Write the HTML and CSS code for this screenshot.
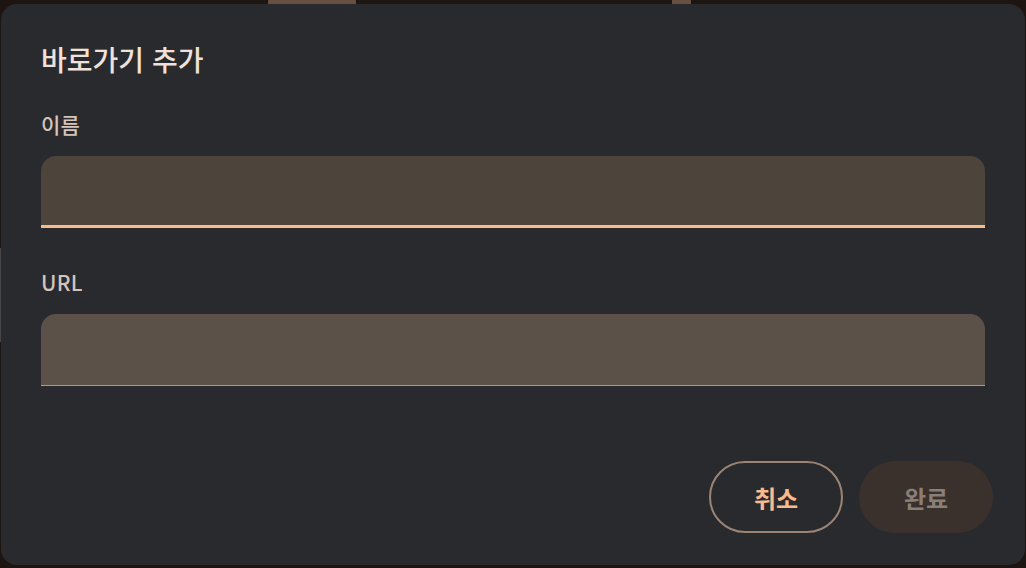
FILE: index.html
```html
<!DOCTYPE html>
<html lang="ko">
    <head>
        <meta charset="utf-8">
        <title>바로가기 추가</title>
        <link rel="stylesheet" href="styles.css">
    </head>
    <body>
      <div class="backdrop">
        <div class="peek peekRound"></div>
        <div class="peek peekBar"></div>
        <div class="peek peekEdge"></div>
      </div>

      <div class="dialog">
        <header class="title">바로가기 추가</header>

        <div class="field">
          <label class="fieldLabel" for="name">이름</label>
          <input class="textInput focused" type="text" id="name">
        </div>

        <div class="field">
          <label class="fieldLabel" for="url">URL</label>
          <input class="textInput" type="text" id="url">
        </div>

        <div class="actions">
          <button class="btn btnOutline">취소</button>
          <button class="btn btnFilled" disabled>완료</button>
        </div>
      </div>
    </body>
</html>
```

FILE: styles.css
```css
  body {
      margin: 0;
      height: 568px;
      overflow: hidden;
      font-family: "Noto Sans CJK KR", "Noto Sans", sans-serif;
      background-color: rgb(28, 21, 17);
      position: relative;
  }

  /* bits of the page behind the dialog */
  .backdrop { position: absolute; inset: 0; }
  .peek { position: absolute; background-color: rgb(104, 80, 64); }
  .peekRound {
      left: 268px;
      top: -40px;
      width: 88px;
      height: 88px;
      border-radius: 50%;
  }
  .peekBar { left: 672px; top: 0; width: 19px; height: 10px; }
  .peekEdge {
      left: 0;
      top: 248px;
      width: 4px;
      height: 94px;
      background-color: rgb(70, 70, 72);
  }

  .dialog {
      position: relative;
      margin: 4px 1px 0 1px;
      height: 561px;
      box-sizing: border-box;
      padding: 37px 32px 32px 40px;
      background-color: rgb(41, 42, 46);
      border-radius: 16px;
      display: flex;
      flex-direction: column;
  }

  .title {
      font-size: 28px;
      line-height: 36px;
      font-weight: 500;
      color: rgb(240, 226, 218);
      margin-bottom: 33px;
  }

  .field {
      display: flex;
      flex-direction: column;
      padding-right: 8px;
      margin-bottom: 40px;
  }

  .fieldLabel {
      font-size: 21px;
      line-height: 28px;
      font-weight: 500;
      color: rgb(214, 196, 186);
      margin-bottom: 18px;
      letter-spacing: 0.3px;
  }

  .textInput {
      height: 72px;
      box-sizing: border-box;
      border: none;
      border-bottom: 1.5px solid rgb(170, 152, 142);
      border-radius: 15px 15px 0 0;
      background-color: rgb(91, 81, 73);
      outline: none;
      padding: 0 16px;
  }

  .textInput.focused {
      background-color: rgb(77, 68, 60);
      border-bottom: 3px solid rgb(247, 187, 142);
  }

  .actions {
      margin-top: auto;
      display: flex;
      justify-content: flex-end;
      gap: 16px;
  }

  .btn {
      width: 134px;
      height: 72px;
      border-radius: 36px;
      font-family: "Noto Sans CJK KR", "Noto Sans", sans-serif;
      font-size: 24px;
      font-weight: 700;
      cursor: pointer;
  }

  .btnOutline {
      background-color: transparent;
      border: 2px solid rgb(156, 132, 116);
      color: rgb(247, 187, 142);
  }

  .btnFilled {
      background-color: rgb(58, 48, 44);
      border: none;
      color: rgb(138, 126, 120);
  }
```
